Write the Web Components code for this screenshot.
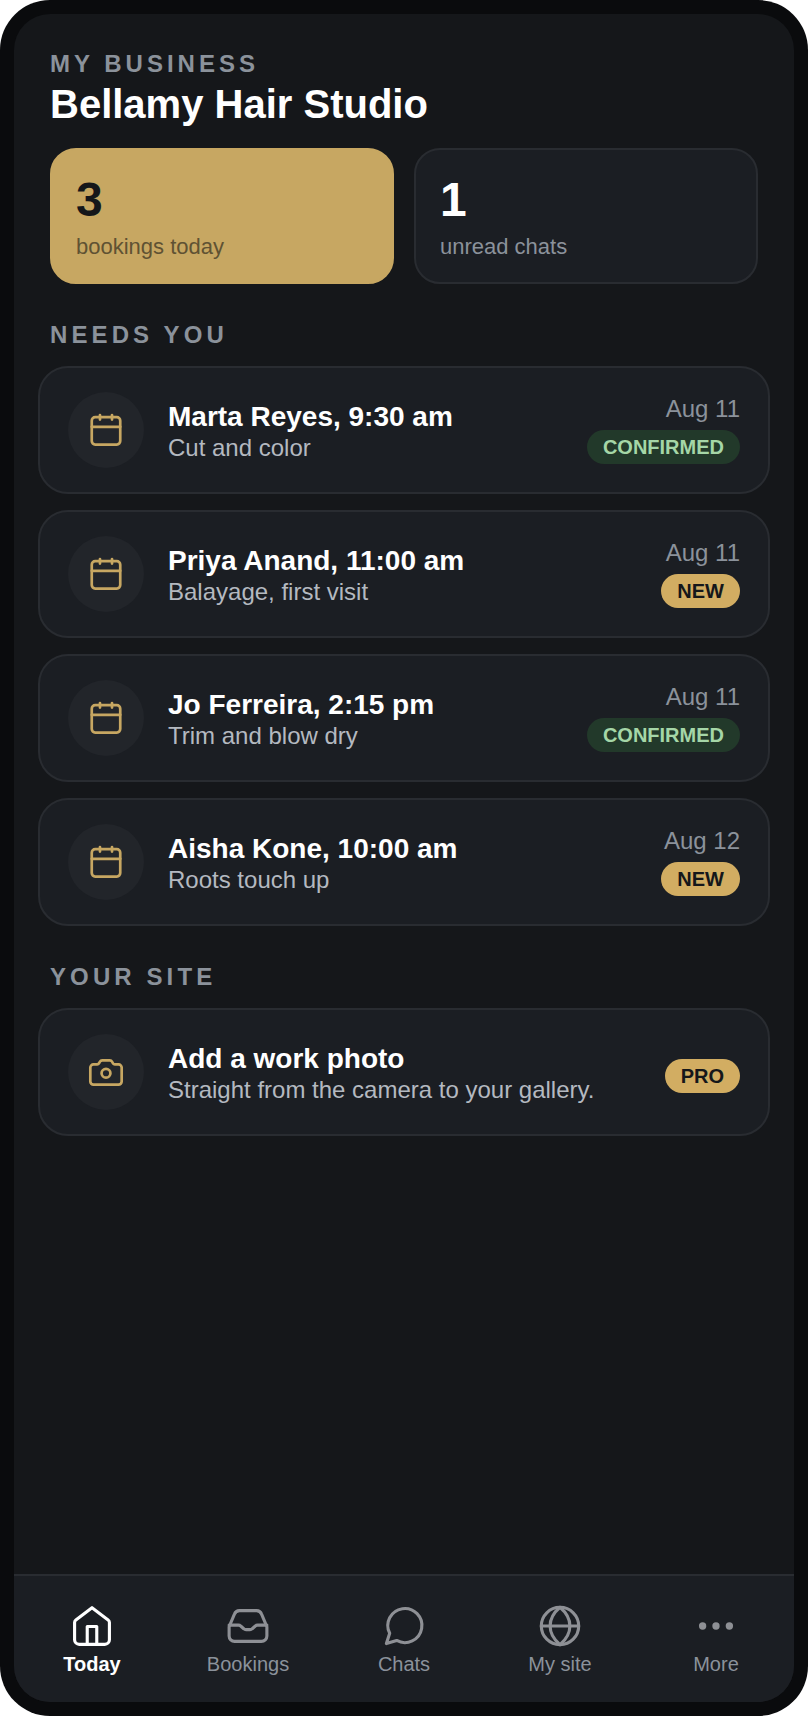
<!DOCTYPE html>
<html>
<head>
<meta charset="utf-8">
<title>Bellamy Hair Studio</title>
<style>
html, body { margin: 0; background: #fff; }
body { font-family: "Liberation Sans", Arial, sans-serif; }
</style>
</head>
<body>
<app-frame>
    <shop-header kicker="MY BUSINESS" title="Bellamy Hair Studio"></shop-header>
    <stat-row>
        <stat-card value="3" label="bookings today" accent></stat-card>
        <stat-card value="1" label="unread chats"></stat-card>
    </stat-row>
    <section-label>NEEDS YOU</section-label>
    <card-list>
        <list-card icon="calendar" heading="Marta Reyes, 9:30 am" sub="Cut and color" date="Aug 11" status="confirmed"></list-card>
        <list-card icon="calendar" heading="Priya Anand, 11:00 am" sub="Balayage, first visit" date="Aug 11" status="new"></list-card>
        <list-card icon="calendar" heading="Jo Ferreira, 2:15 pm" sub="Trim and blow dry" date="Aug 11" status="confirmed"></list-card>
        <list-card icon="calendar" heading="Aisha Kone, 10:00 am" sub="Roots touch up" date="Aug 12" status="new"></list-card>
    </card-list>
    <section-label>YOUR SITE</section-label>
    <card-list>
        <list-card icon="camera" heading="Add a work photo" sub="Straight from the camera to your gallery." status="pro"></list-card>
    </card-list>
    <nav-bar slot="nav">
        <nav-item icon="home" active>Today</nav-item>
        <nav-item icon="inbox">Bookings</nav-item>
        <nav-item icon="chat">Chats</nav-item>
        <nav-item icon="globe">My site</nav-item>
        <nav-item icon="dots">More</nav-item>
    </nav-bar>
</app-frame>

<script>
const ICONS = {
    calendar: '<rect x="3" y="3.900" width="18" height="17.300" rx="2.200"/><path d="M3 10h18M8.200 2.600v2.800M15.800 2.600v2.800"/>',
    camera: '<path d="M2.100 9.200a2 2 0 0 1 2-2h2.300a1.400 1.400 0 0 0 1.200-.7l.5-.9a1.800 1.800 0 0 1 1.500-.9h4.800a1.800 1.800 0 0 1 1.500.9l.5.9a1.400 1.400 0 0 0 1.200.7h2.300a2 2 0 0 1 2 2v8.800a2 2 0 0 1-2 2H4.100a2 2 0 0 1-2-2z"/><circle cx="12" cy="12.800" r="2.800"/>',
    home: '<path d="M12 2 3.200 8.700a1.700 1.700 0 0 0-.7 1.400v9.400A2.500 2.500 0 0 0 5 22h14a2.500 2.500 0 0 0 2.500-2.500v-9.400a1.700 1.700 0 0 0-.7-1.400z"/><path d="M9.400 22v-9.700h5.200V22"/>',
    inbox: '<path d="M1.700 12.400 4.600 5.500a3 3 0 0 1 2.700-1.900h9.400a3 3 0 0 1 2.700 1.900l2.900 6.900v5a3 3 0 0 1-3 3H4.700a3 3 0 0 1-3-3z"/><path d="M1.700 11.500h5.100c.5 0 .9.200 1.200.5l1.700 1.500c.3.300.7.500 1.200.5h2.200c.5 0 .9-.2 1.200-.5l1.700-1.500c.3-.3.700-.5 1.200-.5h5.100"/>',
    chat: '<path d="M2.400 21.600 4.200 16A9.300 9.300 0 1 1 8 19.900z"/>',
    globe: '<circle cx="12" cy="12" r="10.200"/><path d="M1.800 12h20.400M12 1.800c3.400 2.900 5.400 6.500 5.400 10.200s-2 7.300-5.400 10.200c-3.400-2.900-5.400-6.500-5.400-10.200S8.600 4.700 12 1.800z"/>',
    dots: '<circle cx="4.700" cy="12" r="2" fill="currentColor" stroke="none"/><circle cx="12" cy="12" r="2" fill="currentColor" stroke="none"/><circle cx="19.300" cy="12" r="2" fill="currentColor" stroke="none"/>'
}

function iconSvg(name, size, stroke) {
    return `<svg width="${size}" height="${size}" viewBox="0 0 24 24" fill="none" stroke="currentColor" stroke-width="${stroke}" stroke-linecap="round" stroke-linejoin="round">${ICONS[name]}</svg>`
}

class AppFrame extends HTMLElement {
    constructor() {
        super()
        this.attachShadow({ mode: "open" })
        this.shadowRoot.innerHTML = `
            <style>
                :host { display: flex; box-sizing: border-box; width: 808px; height: 1716px; padding: 14px; background: #0a0b0d; border-radius: 50px; }
                .screen { flex: 1; display: flex; flex-direction: column; min-width: 0; background: #15171a; border-radius: 36px; }
                main { flex: 1; display: flex; flex-direction: column; padding: 37px 24px 0; }
            </style>
            <div class="screen">
                <main><slot></slot></main>
                <slot name="nav"></slot>
            </div>`
    }
}

class ShopHeader extends HTMLElement {
    constructor() {
        super()
        this.attachShadow({ mode: "open" })
    }

    connectedCallback() {
        this.shadowRoot.innerHTML = `
            <style>
                :host { display: block; padding: 0 12px; }
                .kicker { font-size: 24px; line-height: 26px; font-weight: 700; letter-spacing: 4px; color: #8b929b; }
                h1 { margin: 3px 0 0; font-size: 40px; line-height: 48px; font-weight: 700; color: #fff; }
            </style>
            <div class="kicker">${this.getAttribute("kicker")}</div>
            <h1>${this.getAttribute("title")}</h1>`
    }
}

class StatRow extends HTMLElement {
    constructor() {
        super()
        this.attachShadow({ mode: "open" })
        this.shadowRoot.innerHTML = `
            <style>
                :host { display: grid; grid-template-columns: 1fr 1fr; gap: 20px; margin-top: 20px; padding: 0 12px; }
            </style>
            <slot></slot>`
    }
}

class StatCard extends HTMLElement {
    constructor() {
        super()
        this.attachShadow({ mode: "open" })
    }

    connectedCallback() {
        this.shadowRoot.innerHTML = `
            <style>
                :host { display: block; box-sizing: border-box; height: 136px; padding: 26px 24px 0; background: #1b1e23; border: 2px solid #292c31; border-radius: 26px; color: #fff; }
                :host([accent]) { background: #c7a762; border-color: #c7a762; color: #15171a; }
                .value { font-size: 48px; line-height: 48px; font-weight: 700; }
                .label { margin-top: 10px; font-size: 22px; line-height: 26px; color: #8b929b; }
                :host([accent]) .label { color: #5f5233; }
            </style>
            <div class="value">${this.getAttribute("value")}</div>
            <div class="label">${this.getAttribute("label")}</div>`
    }
}

class SectionLabel extends HTMLElement {
    constructor() {
        super()
        this.attachShadow({ mode: "open" })
        this.shadowRoot.innerHTML = `
            <style>
                :host { display: block; margin: 37px 0 17px; padding: 0 12px; font-size: 24px; line-height: 28px; font-weight: 700; letter-spacing: 4.1px; color: #8b929b; }
            </style>
            <slot></slot>`
    }
}

class CardList extends HTMLElement {
    constructor() {
        super()
        this.attachShadow({ mode: "open" })
        this.shadowRoot.innerHTML = `
            <style>
                :host { display: flex; flex-direction: column; gap: 16px; }
            </style>
            <slot></slot>`
    }
}

class StatusPill extends HTMLElement {
    constructor() {
        super()
        this.attachShadow({ mode: "open" })
        this.shadowRoot.innerHTML = `
            <style>
                :host { display: inline-block; padding: 0 16px; height: 34px; line-height: 34px; border-radius: 17px; font-size: 20px; font-weight: 700; background: #d2ad62; color: #15171a; }
                :host([kind="confirmed"]) { background: #22392a; color: #a5d6a7; }
            </style>
            <slot></slot>`
    }
}

class ListCard extends HTMLElement {
    constructor() {
        super()
        this.attachShadow({ mode: "open" })
    }

    connectedCallback() {
        const date = this.getAttribute("date") || ""
        const status = this.getAttribute("status")
        this.shadowRoot.innerHTML = `
            <style>
                :host { display: flex; align-items: center; box-sizing: border-box; height: 128px; padding: 0 28px; background: #1b1e23; border: 2px solid #292c31; border-radius: 30px; }
                .badge { flex: none; display: flex; align-items: center; justify-content: center; width: 76px; height: 76px; border-radius: 50%; background: #22252a; color: #c7a762; }
                .text { flex: 1; min-width: 0; margin-left: 24px; padding-top: 2px; }
                .heading { font-size: 28px; line-height: 34px; font-weight: 700; color: #fff; }
                .sub { font-size: 24px; line-height: 28px; color: #b4b9c0; }
                .side { display: flex; flex-direction: column; align-items: flex-end; gap: 8px; }
                .date { font-size: 24px; line-height: 26px; color: #8b929b; }
                .date:empty { height: 0; }
            </style>
            <div class="badge">${iconSvg(this.getAttribute("icon"), 38, 1.7)}</div>
            <div class="text">
                <div class="heading">${this.getAttribute("heading")}</div>
                <div class="sub">${this.getAttribute("sub")}</div>
            </div>
            <div class="side">
                <div class="date">${date}</div>
                <status-pill kind="${status}">${status.toUpperCase()}</status-pill>
            </div>`
    }
}

class NavBar extends HTMLElement {
    constructor() {
        super()
        this.attachShadow({ mode: "open" })
        this.shadowRoot.innerHTML = `
            <style>
                :host { display: grid; grid-template-columns: repeat(5, 1fr); box-sizing: border-box; height: 128px; padding-top: 28px; background: #1b1e23; border-top: 2px solid #292c31; border-radius: 0 0 36px 36px; }
            </style>
            <slot></slot>`
    }
}

class NavItem extends HTMLElement {
    constructor() {
        super()
        this.attachShadow({ mode: "open" })
    }

    connectedCallback() {
        this.shadowRoot.innerHTML = `
            <style>
                :host { display: flex; flex-direction: column; align-items: center; font-size: 20px; line-height: 24px; color: #8b929b; }
                :host([active]) { color: #fff; font-weight: 700; }
                svg { display: block; margin-bottom: 4px; color: #8e9095; }
                :host([active]) svg { color: #fff; }
            </style>
            ${iconSvg(this.getAttribute("icon"), 44, 1.7)}
            <slot></slot>`
    }
}

customElements.define("app-frame", AppFrame)
customElements.define("shop-header", ShopHeader)
customElements.define("stat-row", StatRow)
customElements.define("stat-card", StatCard)
customElements.define("section-label", SectionLabel)
customElements.define("card-list", CardList)
customElements.define("status-pill", StatusPill)
customElements.define("list-card", ListCard)
customElements.define("nav-bar", NavBar)
customElements.define("nav-item", NavItem)
</script>
</body>
</html>
